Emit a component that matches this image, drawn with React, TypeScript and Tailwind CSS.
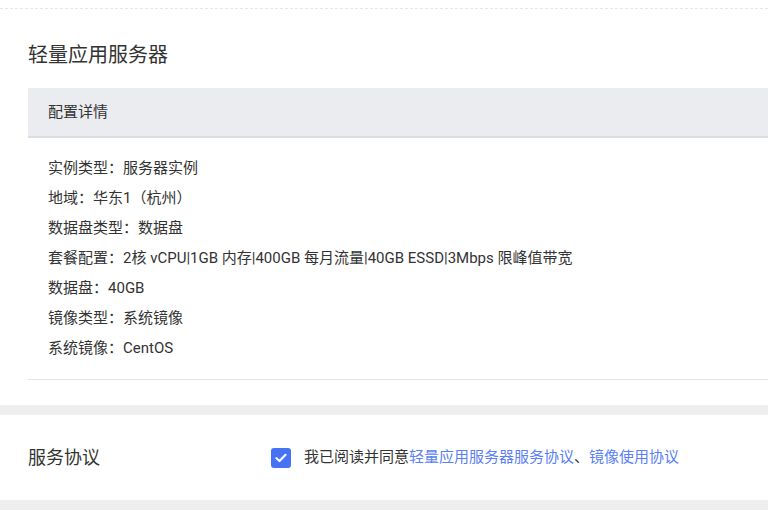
import React, { useState } from "react";

const specs = [
  { label: "实例类型", value: "服务器实例" },
  { label: "地域", value: "华东1（杭州）" },
  { label: "数据盘类型", value: "数据盘" },
  { label: "套餐配置", value: "2核 vCPU|1GB 内存|400GB 每月流量|40GB ESSD|3Mbps 限峰值带宽" },
  { label: "数据盘", value: "40GB" },
  { label: "镜像类型", value: "系统镜像" },
  { label: "系统镜像", value: "CentOS" },
];

const App = () => {
  const [agreed, setAgreed] = useState(true);

  return (
    <div
      className="min-h-screen bg-white text-[#333]"
      style={{ fontFamily: '"Roboto", "Noto Sans CJK SC", sans-serif' }}
    >
      <div className="h-[9px] border-b border-dashed border-[#e6e6e6]" />

      <section className="pl-[28px]">
        <h1 className="pt-[32px] pb-[19px] text-[20px] leading-[28px] font-normal text-[#333]">
          轻量应用服务器
        </h1>
        <div className="h-[50px] flex items-center pl-[20px] bg-[#ebecf0] border-b-2 border-[#dcdde2] text-[15px]">
          配置详情
        </div>
        <ul className="pt-[15px] pb-[16px] pl-[20px] border-b border-[#e3e3e3]">
          {specs.map((s) => (
            <li key={s.label} className="text-[15px] leading-[30px] text-[#333]">
              {s.label}：{s.value}
            </li>
          ))}
        </ul>
      </section>

      <div className="mt-[25px] h-[10px] bg-[#eeeeee]" />

      <section className="h-[85px] flex items-center pl-[28px]">
        <h2 className="w-[243px] text-[18px] font-normal text-[#333]">服务协议</h2>
        <label className="flex items-center gap-[13px] text-[15px] cursor-pointer">
          <button
            type="button"
            onClick={() => setAgreed((v) => !v)}
            className={
              agreed
                ? "w-[20px] h-[20px] rounded-[3px] bg-[#4673f5] flex items-center justify-center"
                : "w-[20px] h-[20px] rounded-[3px] border border-[#ccc] bg-white"
            }
          >
            {agreed && (
              <svg width="12" height="10" viewBox="0 0 12 10" fill="none">
                <path d="M1.5 5.2 4.5 8 10.5 1.8" stroke="white" strokeWidth="2.2" strokeLinecap="round" strokeLinejoin="round" />
              </svg>
            )}
          </button>
          <span>
            我已阅读并同意
            <a className="text-[#5a7ff6]">轻量应用服务器服务协议</a>
            、
            <a className="text-[#5a7ff6]">镜像使用协议</a>
          </span>
        </label>
      </section>

      <div className="h-[10px] bg-[#eeeeee]" />
    </div>
  );
};

export default App;
